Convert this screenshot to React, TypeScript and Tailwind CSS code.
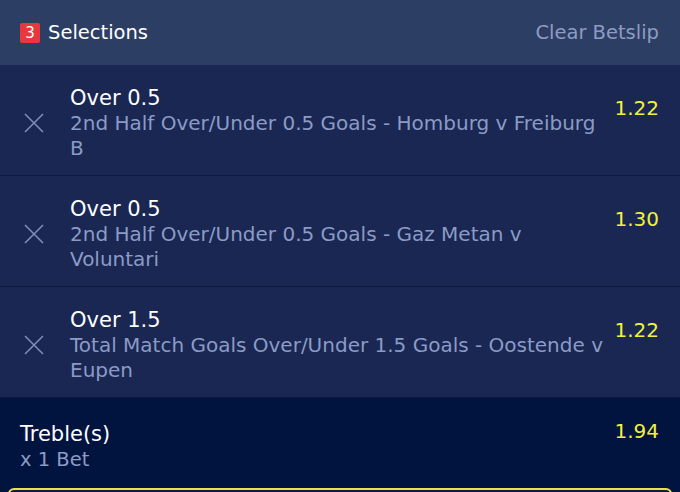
const selections = [
  { pick: 'Over 0.5', market: '2nd Half Over/Under 0.5 Goals - Homburg v Freiburg B', odds: '1.22' },
  { pick: 'Over 0.5', market: '2nd Half Over/Under 0.5 Goals - Gaz Metan v Voluntari', odds: '1.30' },
  { pick: 'Over 1.5', market: 'Total Match Goals Over/Under 1.5 Goals - Oostende v Eupen', odds: '1.22' },
]

function CloseIcon() {
  return (
    <svg width="22" height="22" viewBox="0 0 22 22" className="text-[#8190b8]">
      <path d="M2 2 L20 20 M20 2 L2 20" stroke="currentColor" strokeWidth="1.5" fill="none" />
    </svg>
  )
}

export default function App() {
  return (
    <div className="w-[680px] h-[492px] overflow-hidden bg-[#00143f] font-['DejaVu_Sans',sans-serif]">
      <div className="flex items-center justify-between h-[65px] bg-[#2d3e64] pl-5 pr-[21px] pt-px">
        <div className="flex items-center gap-2">
          <span className="w-5 h-5 rounded-[2px] bg-[#e8383d] text-white text-[15px] leading-5 text-center">3</span>
          <span className="text-white text-[19.5px]">Selections</span>
        </div>
        <span className="text-[#8d9bc2] text-[19.5px]">Clear Betslip</span>
      </div>

      {selections.map((s, i) => (
        <div key={i} className="flex h-[111px] bg-[#1a2753] border-b border-[#0e1a3e] pl-[23px] pr-[21px] pt-[21px]">
          <div className="pt-[26px] w-[47px] shrink-0">
            <CloseIcon />
          </div>
          <div className="flex-1 min-w-0 pr-[5px]">
            <div className="text-white text-[21px] leading-[25px]">{s.pick}</div>
            <div className="text-[#8b9bc5] text-[20px] leading-[24.5px]">{s.market}</div>
          </div>
          <div className="text-[#f0f23a] text-[20px] leading-[24px] pt-[10px]">{s.odds}</div>
        </div>
      ))}

      <div className="flex justify-between pl-5 pr-[21px] pt-[24px]">
        <div>
          <div className="text-white text-[21px] leading-[25px]">Treble(s)</div>
          <div className="text-[#8b9bc5] text-[19.5px] leading-[25px]">x 1 Bet</div>
        </div>
        <div className="text-[#f0f23a] text-[20px] leading-[18px]">1.94</div>
      </div>
      <div className="mx-2 mt-[16px] h-[40px] rounded-md border-2 border-[#e7e34a] bg-[#0d1b3f]" />
    </div>
  )
}
